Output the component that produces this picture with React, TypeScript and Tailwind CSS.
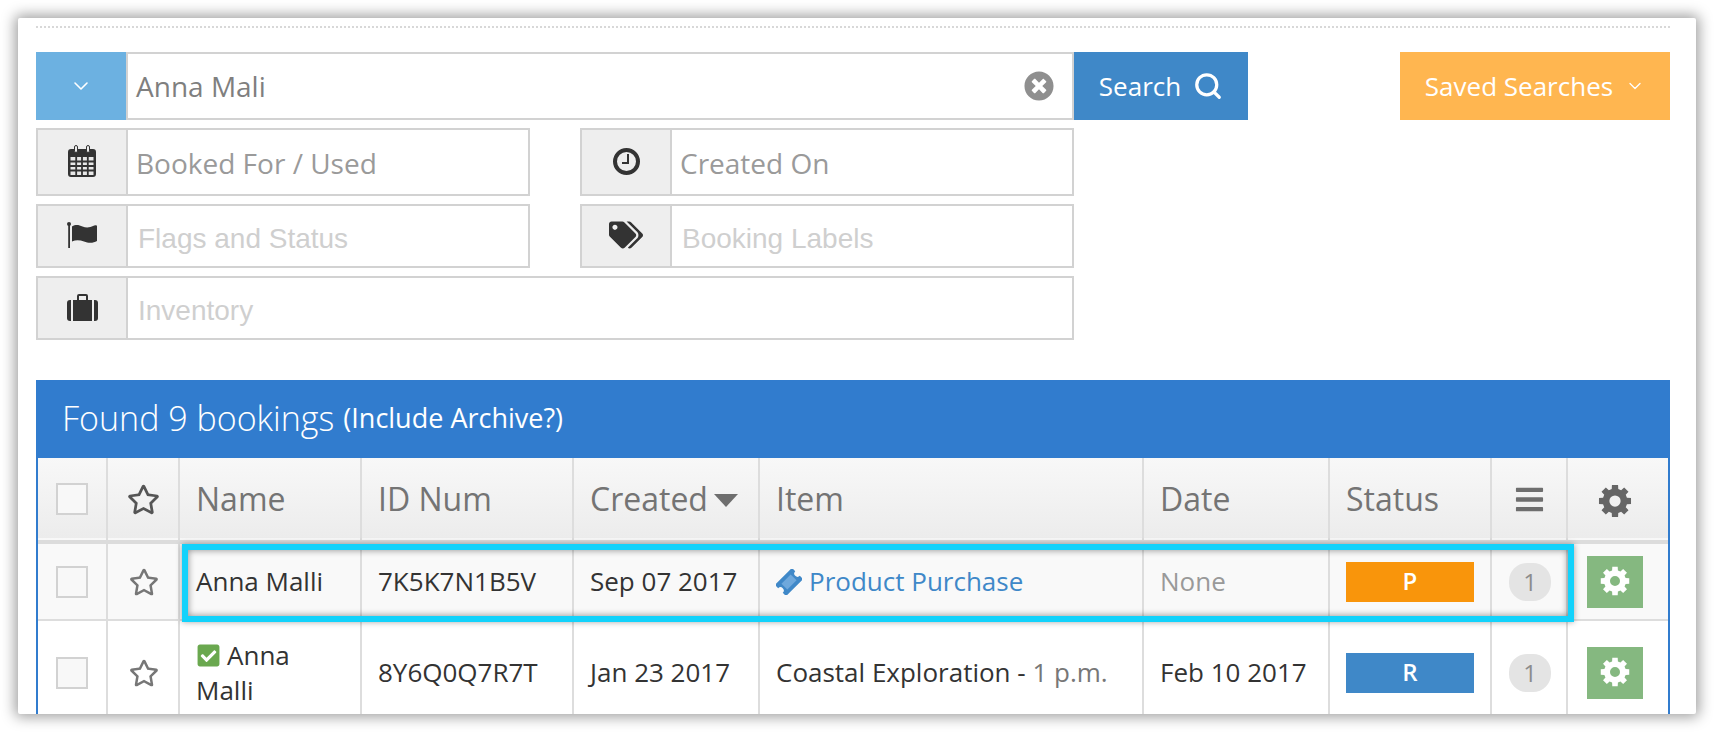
import React from 'react';
import { ChevronDown, Search } from 'lucide-react';
import { FaBars, FaCheckSquare, FaRegStar, FaTags, FaTimesCircle } from 'react-icons/fa';

const CalendarIcon = () => (
  <svg width="28" height="32" viewBox="0 0 28 32">
    <path fill="#333" d="M3 4h3v3h3V4h10v3h3V4h3a3 3 0 0 1 3 3v22a3 3 0 0 1-3 3H3a3 3 0 0 1-3-3V7a3 3 0 0 1 3-3z" />
    <rect x="6.500" y="0.500" width="3" height="7" rx="1.500" fill="#eee" stroke="#333" />
    <rect x="18.500" y="0.500" width="3" height="7" rx="1.500" fill="#eee" stroke="#333" />
    <rect x="2.500" y="12" width="23" height="18" fill="#e8e8e8" />
    <path stroke="#333" strokeWidth="1.800" fill="none" d="M2 16.500h24M2 21h24M2 25.500h24M8.200 12v18M14 12v18M19.800 12v18" />
  </svg>
);

const ClockIcon = () => (
  <svg width="27" height="27" viewBox="0 0 27 27" fill="none" stroke="#333">
    <circle cx="13.500" cy="13.500" r="11.500" strokeWidth="4" />
    <path d="M15 6v9H9" strokeWidth="2" />
  </svg>
);

const FlagIcon = () => (
  <svg width="30" height="26" viewBox="0 0 30 26" fill="#333">
    <circle cx="2" cy="2" r="2" />
    <rect x="1.200" y="2" width="1.800" height="24" />
    <path d="M5 4.500c4-2.500 7-1.500 10.500 0s8 1 10.500-.500c1.500-1 4-1 4 0v15c-4 2.500-9 2-13 .500s-8-2-12 0z" />
  </svg>
);

const SuitcaseIcon = () => (
  <svg width="31" height="28" viewBox="0 0 31 28" fill="#333">
    <path d="M4 7v21H3a3 3 0 0 1-3-3V10a3 3 0 0 1 3-3z" />
    <path d="M27 7h1a3 3 0 0 1 3 3v15a3 3 0 0 1-3 3h-1z" />
    <path d="M6 7h4V3a2 2 0 0 1 2-2h7a2 2 0 0 1 2 2v4h4v21H6zM12 3v4h7V3z" fillRule="evenodd" />
  </svg>
);

const TicketIcon = () => (
  <svg width="26" height="26" viewBox="0 0 28 28" fill="#3f88c8">
    <g transform="rotate(-45 14 14)">
      <path d="M1 5.500h26v5a3 3 0 0 0 0 7v5H1v-5a3 3 0 0 0 0-7z" />
      <rect x="7" y="9.500" width="14" height="9" fill="#6ea8dc" />
    </g>
  </svg>
);

// eight toothed cog, hole punched through with even-odd
const gearPath = (() => {
  const pts: string[] = [];
  const teeth = 8;
  for (let i = 0; i < teeth; i++) {
    const a = (i / teeth) * Math.PI * 2;
    const step = Math.PI / teeth;
    const corners: [number, number][] = [
      [11, a - step * 0.68],
      [14.500, a - step * 0.48],
      [14.500, a + step * 0.48],
      [11, a + step * 0.68],
    ];
    corners.forEach(([r, t]) => {
      pts.push(`${(16 + r * Math.sin(t)).toFixed(2)} ${(16 - r * Math.cos(t)).toFixed(2)}`);
    });
  }
  return `M${pts.join('L')}zM16 11a5 5 0 1 0 0 10a5 5 0 1 0 0-10z`;
})();

const GearIcon = ({ size, color }: { size: number; color: string }) => (
  <svg width={size} height={size} viewBox="0 0 32 32" className={color}>
    <path d={gearPath} fill="currentColor" fillRule="evenodd" />
  </svg>
);

const fieldLabel = "font-['Open_Sans',sans-serif] text-[28px] text-[#9a9a9a] pt-[2px]";
const helvLabel = "font-['Liberation_Sans',sans-serif] text-[28px] text-[#cfcfcf] pt-[6px]";

function Field({ icon, label, className, labelClass, pad }: { icon: React.ReactNode; label: string; className: string; labelClass: string; pad: string }) {
  return (
    <div className={`flex border-2 border-[#d2d2d2] ${className}`}>
      <div className="flex w-[90px] shrink-0 items-center justify-center border-r-2 border-[#d2d2d2] bg-[#eeeeee] pb-[2px]">{icon}</div>
      <div className={`flex items-center ${pad} ${labelClass}`}>{label}</div>
    </div>
  );
}

const th = "border-r-2 border-[#dddddd] pl-[16px] text-left font-normal text-[32px] text-[#747474]";
const td = "border-r-2 border-[#dddddd] pl-[16px] text-[26px] text-[#333333]";

function Badge({ letter, color }: { letter: string; color: string }) {
  return <div className={`flex h-[40px] w-[128px] items-center justify-center pb-[2px] text-[24px] font-semibold text-white ${color}`}>{letter}</div>;
}

function Count() {
  return <div className="flex h-[38px] w-[42px] items-center justify-center rounded-[18px] bg-[#e4e4e4] text-[24px] text-[#8c8c8c]">1</div>;
}

function GearButton() {
  return (
    <div className="ml-[19px] flex h-[52px] w-[56px] items-center justify-center bg-[#85b880] pb-[2px]">
      <GearIcon size={32} color="text-white" />
    </div>
  );
}

function Checkbox() {
  return <div className="mx-auto h-[32px] w-[32px] border-2 border-[#d2d2d2] bg-[#f8f8f8]" />;
}

export default function App() {
  return (
    <div className="h-[732px] overflow-hidden bg-white pt-[18px] font-['Open_Sans',sans-serif]">
      <div className="mx-[18px] h-[696px] overflow-hidden rounded-[2px] bg-white pl-[18px] pr-[26px] pt-[8px] shadow-[0_0_14px_3px_rgba(0,0,0,0.38)]">
        <div className="border-t-2 border-dotted border-[#d8d8d8]" />

        <div className="mt-[24px] flex flex-col gap-[8px]">
          <div className="flex h-[68px]">
            <div className="flex w-[90px] items-center justify-center bg-[#6cb1e1]">
              <ChevronDown className="h-[24px] w-[24px] text-white" strokeWidth={1.6} />
            </div>
            <div className="flex w-[948px] items-center justify-between border-2 border-[#d2d2d2] pl-[8px] pr-[18px] text-[28px] text-[#7f7f7f]">
              <span>Anna Mali</span>
              <FaTimesCircle className="text-[30px] text-[#8f8f8f]" />
            </div>
            <div className="flex w-[174px] items-center justify-center gap-[12px] bg-[#3f88c8] text-[26px] text-white">
              <span>Search</span>
              <Search className="h-[30px] w-[30px]" strokeWidth={2.6} />
            </div>
            <div className="ml-auto flex w-[270px] items-center justify-center gap-[12px] bg-[#ffb650] text-[26px] text-white">
              <span>Saved Searches</span>
              <ChevronDown className="h-[20px] w-[20px]" strokeWidth={1.6} />
            </div>
          </div>

          <div className="flex w-[1038px] justify-between">
            <Field className="h-[68px] w-[494px]" icon={<CalendarIcon />} label="Booked For / Used" labelClass={fieldLabel} pad="pl-[8px]" />
            <Field className="h-[68px] w-[494px]" icon={<ClockIcon />} label="Created On" labelClass={fieldLabel} pad="pl-[8px]" />
          </div>
          <div className="flex w-[1038px] justify-between">
            <Field className="h-[64px] w-[494px]" icon={<FlagIcon />} label="Flags and Status" labelClass={helvLabel} pad="pl-[10px]" />
            <Field className="h-[64px] w-[494px]" icon={<FaTags className="text-[34px] text-[#333]" />} label="Booking Labels" labelClass={helvLabel} pad="pl-[10px]" />
          </div>
          <Field className="h-[64px] w-[1038px]" icon={<SuitcaseIcon />} label="Inventory" labelClass={helvLabel} pad="pl-[10px]" />
        </div>

        <div className="mt-[40px]">
          <div className="flex h-[78px] items-center bg-[#317cce] pl-[26px] pb-[2px] text-white">
            <span className="text-[34px] font-light">Found 9 bookings</span>
            <span className="ml-[9px] text-[27px]">(Include Archive?)</span>
          </div>
          <div className="relative border-x-2 border-[#317cce]">
            <table className="w-full table-fixed border-collapse">
              <colgroup>
                <col className="w-[69px]" />
                <col className="w-[72px]" />
                <col className="w-[182px]" />
                <col className="w-[212px]" />
                <col className="w-[186px]" />
                <col className="w-[384px]" />
                <col className="w-[186px]" />
                <col className="w-[162px]" />
                <col className="w-[76px]" />
                <col className="w-[101px]" />
              </colgroup>
              <thead>
                <tr className="h-[84px] border-b-4 border-[#dcdcdc] bg-gradient-to-b from-[#f8f8f8] to-[#ececec]">
                  <th className="border-r-2 border-[#dddddd] pl-0"><Checkbox /></th>
                  <th className="border-r-2 border-[#dddddd]"><FaRegStar className="mx-auto text-[33px] text-[#555]" /></th>
                  <th className={th}>Name</th>
                  <th className={th}>ID Num</th>
                  <th className={th}>
                    <span className="flex items-center gap-[6px]">
                      Created
                      <span className="mt-[3px] h-0 w-0 border-x-[12px] border-t-[13px] border-x-transparent border-t-[#6e6e6e]" />
                    </span>
                  </th>
                  <th className={th}>Item</th>
                  <th className={th}>Date</th>
                  <th className={th}>Status</th>
                  <th className="border-r-2 border-[#dddddd]"><FaBars className="mx-auto text-[31px] text-[#6e6e6e]" /></th>
                  <th><div className="ml-[29px] mt-[4px]"><GearIcon size={36} color="text-[#666]" /></div></th>
                </tr>
              </thead>
              <tbody>
                <tr className="h-[78px] border-b-2 border-[#dddddd] bg-[#f9f9f9]">
                  <td className="border-r-2 border-[#dddddd]"><Checkbox /></td>
                  <td className="border-r-2 border-[#dddddd]"><FaRegStar className="ml-[21px] text-[30px] text-[#777]" /></td>
                  <td className={td}>Anna Malli</td>
                  <td className={td}>7K5K7N1B5V</td>
                  <td className={td}>Sep 07 2017</td>
                  <td className={td}>
                    <span className="flex items-center gap-[7px] text-[#3f88c8]">
                      <TicketIcon />
                      Product Purchase
                    </span>
                  </td>
                  <td className={`${td} text-[#999999]`}>None</td>
                  <td className={td}><Badge letter="P" color="bg-[#f9950b]" /></td>
                  <td className="border-r-2 border-[#dddddd] pl-[17px]"><Count /></td>
                  <td><GearButton /></td>
                </tr>
                <tr className="h-[104px] bg-white">
                  <td className="border-r-2 border-[#dddddd]"><Checkbox /></td>
                  <td className="border-r-2 border-[#dddddd]"><FaRegStar className="ml-[21px] text-[30px] text-[#777]" /></td>
                  <td className={`${td} leading-[35px]`}>
                    <FaCheckSquare className="mr-[6px] inline-block align-[-3px] text-[25px] text-[#6aa84f]" />
                    Anna
                    <br />
                    Malli
                  </td>
                  <td className={td}>8Y6Q0Q7R7T</td>
                  <td className={td}>Jan 23 2017</td>
                  <td className={td}>Coastal Exploration - <span className="text-[#777777]">1 p.m.</span></td>
                  <td className={td}>Feb 10 2017</td>
                  <td className={td}><Badge letter="R" color="bg-[#3f88c8]" /></td>
                  <td className="border-r-2 border-[#dddddd] pl-[17px]"><Count /></td>
                  <td><GearButton /></td>
                </tr>
              </tbody>
            </table>
            <div className="absolute left-[144px] top-[86px] h-[78px] w-[1392px] border-[6px] border-[#12d2fb] shadow-[0_0_6px_rgba(0,0,0,0.35),inset_0_0_7px_rgba(0,0,0,0.45)]" />
          </div>
        </div>
      </div>
    </div>
  );
}
